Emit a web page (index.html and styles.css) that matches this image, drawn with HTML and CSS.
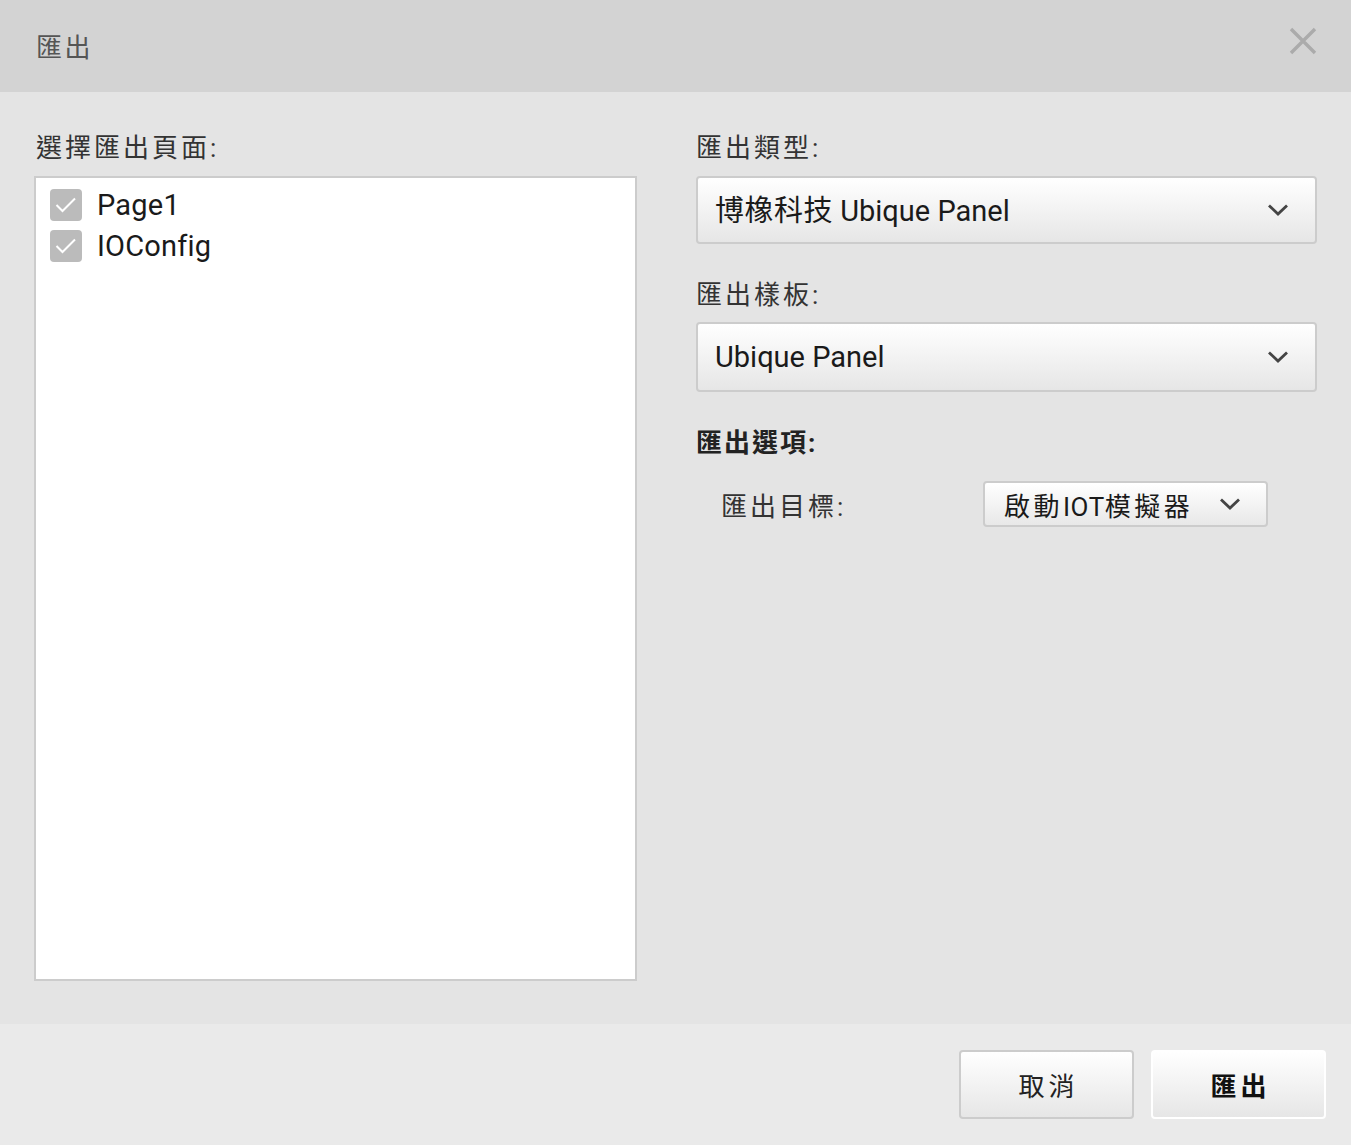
FILE: index.html
```html
<!DOCTYPE html>
<html lang="zh-Hant">
<head>
<meta charset="utf-8">
<title>匯出</title>
<link rel="stylesheet" href="styles.css">
</head>
<body>
<div class="dialog">
  <div class="header">
    <div class="title">匯出</div>
    <svg class="close" width="28" height="28" viewBox="0 0 28 28"><path d="M2 2 L26 26 M26 2 L2 26" stroke="#ababab" stroke-width="3.4" fill="none"/></svg>
  </div>
  <div class="main">
    <div class="left">
      <div class="label">選擇匯出頁面:</div>
      <div class="list">
        <div class="item">
          <span class="cb"><svg width="32" height="32" viewBox="0 0 32 32"><path d="M6.5 16 L12.5 22 L25 9.5" stroke="#fff" stroke-width="2" fill="none"/></svg></span>
          <span class="item-text">Page1</span>
        </div>
        <div class="item">
          <span class="cb"><svg width="32" height="32" viewBox="0 0 32 32"><path d="M6.5 16 L12.5 22 L25 9.5" stroke="#fff" stroke-width="2" fill="none"/></svg></span>
          <span class="item-text">IOConfig</span>
        </div>
      </div>
    </div>
    <div class="right">
      <div class="label">匯出類型:</div>
      <div class="select">
        <span class="sel-text sel-text-up"><span class="cjk">博橡科技</span> Ubique Panel</span>
        <svg class="chev" width="22" height="14" viewBox="0 0 22 14"><path d="M2 2.5 L11 11 L20 2.5" stroke="#444" stroke-width="2.8" fill="none"/></svg>
      </div>
      <div class="label label2">匯出樣板:</div>
      <div class="select select-tall">
        <span class="sel-text">Ubique Panel</span>
        <svg class="chev" width="22" height="14" viewBox="0 0 22 14"><path d="M2 2.5 L11 11 L20 2.5" stroke="#444" stroke-width="2.8" fill="none"/></svg>
      </div>
      <div class="label label3">匯出選項:</div>
      <div class="opt-row">
        <div class="opt-label">匯出目標:</div>
        <div class="small-select">
          <span class="small-text">啟動<span class="latin">IOT</span>模擬器</span>
          <svg class="chev-s" width="22" height="14" viewBox="0 0 22 14"><path d="M2 2.5 L11 11 L20 2.5" stroke="#444" stroke-width="2.8" fill="none"/></svg>
        </div>
      </div>
    </div>
  </div>
  <div class="footer">
    <button class="btn btn-cancel">取消</button>
    <button class="btn btn-ok">匯出</button>
  </div>
</div>
</body>
</html>
```
FILE: styles.css
```css
html, body {
  margin: 0;
  padding: 0;
}
body {
  font-family: Roboto, "Noto Sans CJK TC", sans-serif;
  color: #222;
  background: #e4e4e4;
}
.dialog {
  width: 1351px;
  height: 1145px;
  display: flex;
  flex-direction: column;
}
.header {
  height: 92px;
  background: #d3d3d3;
  display: flex;
  align-items: center;
  justify-content: space-between;
  padding: 0 34px 12px 36px;
  box-sizing: border-box;
}
.title {
  font-size: 26px;
  color: #555;
  letter-spacing: 2.5px;
  padding-top: 10px;
}
.close {
  margin-top: 2px;
}
.main {
  flex: 1;
  background: #e4e4e4;
  display: flex;
  gap: 59px;
  padding: 40px 34px 43px 34px;
  box-sizing: border-box;
}
.left {
  width: 603px;
  display: flex;
  flex-direction: column;
}
.right {
  flex: 1;
  display: flex;
  flex-direction: column;
}
.label {
  font-size: 26px;
  line-height: 32px;
  height: 32px;
  color: #333;
  margin-bottom: 12px;
  letter-spacing: 3px;
}
.left .label {
  padding-left: 2px;
}
.label2 {
  margin-top: 35px;
  margin-bottom: 11px;
}
.label3 {
  margin-top: 35px;
  margin-bottom: 0;
  font-weight: bold;
  color: #222;
  letter-spacing: 2px;
}
.list {
  flex: 1;
  background: #fff;
  border: 2px solid #cccccc;
  padding: 6px 14px;
  box-sizing: border-box;
}
.item {
  display: flex;
  align-items: center;
  height: 41px;
}
.cb {
  width: 32px;
  height: 32px;
  background: #bbbbbb;
  border-radius: 4px;
  display: block;
  flex: none;
}
.cb svg {
  display: block;
}
.item-text {
  font-size: 29px;
  margin-left: 15px;
  color: #1a1a1a;
  letter-spacing: 0.2px;
}
.select {
  height: 68px;
  border: 2px solid #cccccc;
  border-radius: 4px;
  background: linear-gradient(#ffffff, #e6e6e6);
  box-sizing: border-box;
  display: flex;
  align-items: center;
  justify-content: space-between;
  padding: 0 26px 0 17px;
}
.select-tall {
  height: 70px;
}
.sel-text {
  font-size: 29px;
  color: #1a1a1a;
}
.sel-text-up {
  padding-bottom: 4px;
}
.cjk {
  letter-spacing: 0.5px;
}
.opt-row {
  display: flex;
  align-items: center;
  margin-top: 22px;
  padding-left: 25px;
}
.opt-label {
  width: 262px;
  font-size: 26px;
  color: #333;
  letter-spacing: 3px;
}
.small-select {
  width: 285px;
  height: 46px;
  border: 2px solid #cccccc;
  border-radius: 4px;
  background: linear-gradient(#ffffff, #e8e8e8);
  box-sizing: border-box;
  display: flex;
  align-items: center;
  justify-content: space-between;
  padding: 0 25px 0 19px;
}
.small-text {
  font-size: 26px;
  color: #1a1a1a;
  letter-spacing: 3.5px;
}
.latin {
  letter-spacing: 0.5px;
}
.footer {
  height: 121px;
  background: #eaeaea;
  display: flex;
  justify-content: flex-end;
  align-items: flex-start;
  gap: 17px;
  padding: 26px 25px 0 0;
  box-sizing: border-box;
}
.btn {
  width: 175px;
  height: 69px;
  border-radius: 4px;
  background: linear-gradient(#ffffff, #e6e6e6);
  font-family: Roboto, "Noto Sans CJK TC", sans-serif;
  font-size: 26px;
  color: #222;
  letter-spacing: 4px;
  text-indent: 4px;
  box-sizing: border-box;
  padding: 0;
}
.btn-cancel {
  border: 2px solid #cccccc;
}
.btn-ok {
  border: 2px solid #ffffff;
  font-weight: bold;
  color: #111;
}
```
